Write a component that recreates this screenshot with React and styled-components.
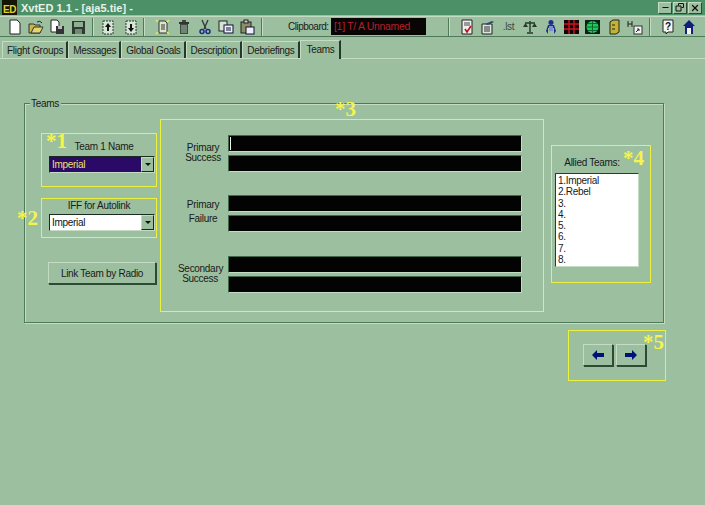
import React from "react";
import styled, { createGlobalStyle } from "styled-components";
import { Minus, X } from "lucide-react";

const face = "#9cbf9f";
const hi = "#c4dcc4";
const lo = "#4f7a5a";
const yellow = "#ecf23c";

const Global = createGlobalStyle`
  html, body { margin: 0; padding: 0; background: ${face}; }
  body { font-family: "Liberation Sans", Arial, sans-serif; font-size: 10px; letter-spacing: -0.3px; color: #1a1a1a; }
`;

const Window = styled.div`
  width: 705px;
  height: 505px;
  overflow: hidden;
  background: ${face};
`;

const TitleBar = styled.div`
  height: 15px;
  background: #4c9068;
  display: flex;
  align-items: center;
  padding: 0 3px 0 2px;
  color: #e8f2e8;
  font-weight: bold;
  font-size: 11px;
  letter-spacing: 0;
`;

const AppIcon = styled.div`
  width: 15px;
  height: 15px;
  background: #151505;
  color: #e0d030;
  font-size: 10px;
  font-weight: bold;
  letter-spacing: -0.5px;
  line-height: 19px;
  text-align: center;
  margin-right: 4px;
  overflow: hidden;
`;

const TitleText = styled.div`
  flex: 1;
`;

const WinButton = styled.div`
  width: 14px;
  height: 12px;
  margin-left: 1px;
  background: ${face};
  border: 1px solid;
  border-color: ${hi} #2c4a34 #2c4a34 ${hi};
  box-sizing: border-box;
  display: flex;
  align-items: center;
  justify-content: center;
  color: #111;
`;

const Toolbar = styled.div`
  height: 21px;
  display: flex;
  align-items: center;
  padding-left: 4px;
  border-top: 1px solid ${hi};
  border-bottom: 1px solid ${lo};
  box-sizing: border-box;
  margin-top: 1px;
`;

const Tool = styled.div`
  width: ${(p) => p.$w || 21}px;
  height: 18px;
  display: flex;
  align-items: center;
  justify-content: center;
  flex: none;
`;

const Sep = styled.div`
  width: 2px;
  height: 18px;
  margin: 0 ${(p) => p.$r ?? 3}px 0 ${(p) => p.$l ?? 4}px;
  border-left: 1px solid ${lo};
  border-right: 1px solid ${hi};
  box-sizing: border-box;
  flex: none;
`;

const ClipLabel = styled.span`
  margin-left: 22px;
  width: 43px;
  font-size: 10px;
  letter-spacing: -0.5px;
  flex: none;
`;

const ClipValue = styled.div`
  width: 95px;
  height: 17px;
  background: #0a0505;
  color: #b5202c;
  font-size: 10.5px;
  line-height: 17px;
  padding-left: 3px;
  box-sizing: border-box;
  flex: none;
`;

const ListText = styled.span`
  font-size: 10px;
  color: #3c4a40;
`;

const Tabs = styled.div`
  display: flex;
  align-items: flex-end;
  height: 21px;
  padding-left: 2px;
`;

const Tab = styled.div`
  height: ${(p) => (p.$active ? 19 : 17)}px;
  line-height: 17px;
  padding: 0 ${(p) => (p.$active ? 4 : 3)}px 0 ${(p) => (p.$active ? 6 : 4)}px;
  border-top: 1px solid ${hi};
  border-left: 1px solid ${hi};
  border-right: 2px solid #26382c;
  box-sizing: border-box;
  margin-bottom: ${(p) => (p.$active ? -1 : 0)}px;
  background: ${face};
  position: relative;
`;

const TabLine = styled.div`
  height: 1px;
  background: ${hi};
`;

const Page = styled.div`
  padding: 44px 0 0 24px;
`;

const Group = styled.div`
  position: relative;
  width: 640px;
  height: 220px;
  box-sizing: border-box;
  border: 1px solid ${lo};
  box-shadow: 1px 1px 0 ${hi}, inset 1px 1px 0 ${hi};
  display: flex;
  padding: 15px 0 0 16px;
`;

const GroupTitle = styled.span`
  position: absolute;
  top: -6px;
  left: 5px;
  padding: 0 2px 0 1px;
  background: ${face};
`;

const Left = styled.div`
  width: 116px;
  padding-top: 14px;
  flex: none;
`;

const Note = styled.div`
  position: relative;
  box-sizing: border-box;
  border: 1px solid ${yellow};
  width: ${(p) => p.$w}px;
  height: ${(p) => p.$h}px;
`;

const Star = styled.span`
  position: absolute;
  font-family: "Liberation Serif", "Times New Roman", serif;
  font-weight: bold;
  font-size: 21px;
  letter-spacing: 0;
  line-height: 21px;
  color: #f4f44c;
  left: ${(p) => p.$x}px;
  top: ${(p) => p.$y}px;
`;

const NameBox = styled(Note)`
  padding: ${(p) => p.$top}px 0 0 7px;
  margin-bottom: ${(p) => p.$gap}px;
`;

const FieldCaption = styled.div`
  width: 100px;
  text-align: center;
  padding-left: ${(p) => p.$indent || 0}px;
  box-sizing: border-box;
  height: 11px;
  line-height: 11px;
  margin-bottom: ${(p) => p.$gap}px;
`;

const Combo = styled.div`
  width: 106px;
  height: 17px;
  box-sizing: border-box;
  display: flex;
  border: 1px solid #1a2a20;
  border-right-color: ${hi};
  border-bottom-color: ${hi};
  background: ${(p) => (p.$dark ? "#2a0a66" : "#fff")};
  color: ${(p) => (p.$dark ? "#f0e070" : "#111")};
  line-height: 15px;
  padding-left: 2px;
`;

const ComboText = styled.span`
  flex: 1;
`;

const ComboArrow = styled.div`
  width: 13px;
  background: ${face};
  border: 1px solid;
  border-color: ${hi} #1a2a20 #1a2a20 ${hi};
  box-sizing: border-box;
  display: flex;
  align-items: center;
  justify-content: center;
  &::after {
    content: "";
    border: 3px solid transparent;
    border-top-color: #111;
    border-bottom: 0;
  }
`;

const RaisedButton = styled.div`
  box-sizing: border-box;
  background: ${face};
  border: 1px solid;
  border-color: ${hi} #2c4a34 #2c4a34 ${hi};
  box-shadow: 1px 1px 0 #2c4a34;
  display: flex;
  align-items: center;
  justify-content: center;
`;

const RadioButton = styled(RaisedButton)`
  width: 108px;
  height: 22px;
  margin: 24px 0 0 7px;
`;

const Messages = styled(Note)`
  margin: 0 0 0 3px;
  padding-top: 15px;
  flex: none;
`;

const MessageRow = styled.div`
  display: flex;
  height: 37px;
  margin-bottom: ${(p) => p.$gap}px;
`;

const RowLabel = styled.div`
  width: 67px;
  margin-top: ${(p) => p.$top}px;
  line-height: ${(p) => p.$lh}px;
  flex: none;
  padding: 0 ${(p) => p.$pad || 0}px 0 17px;
  box-sizing: border-box;
  text-align: center;
`;

const Fields = styled.div`
  display: flex;
  flex-direction: column;
  gap: 3px;
`;

const Field = styled.div`
  width: 294px;
  height: 17px;
  box-sizing: border-box;
  background: #030303;
  border: 1px solid;
  border-color: #3f6a4a ${hi} ${hi} #3f6a4a;
  position: relative;
`;

const Caret = styled.div`
  position: absolute;
  left: 1px;
  top: 1px;
  width: 1px;
  height: 13px;
  background: #eee;
`;

const Allied = styled(Note)`
  margin: 26px 0 0 7px;
  padding: 11px 0 0 3px;
  flex: none;
`;

const AlliedCaption = styled.div`
  text-align: center;
  height: 11px;
  line-height: 11px;
  width: 74px;
  margin-bottom: 5px;
`;

const ListBox = styled.div`
  width: 84px;
  height: 94px;
  box-sizing: border-box;
  background: #fff;
  border: 1px solid;
  border-color: #2c3a30 ${hi} ${hi} #2c3a30;
  padding: 1px 0 0 2px;
  line-height: 11.3px;
`;

const Nav = styled(Note)`
  margin: 7px 0 0 544px;
  display: flex;
  gap: 3px;
  padding: 13px 0 0 14px;
`;

const NavButton = styled(RaisedButton)`
  width: 30px;
  height: 22px;
`;

const Icon = ({ children }) => (
  <svg width="16" height="16" viewBox="0 0 16 16">
    {children}
  </svg>
);

const Doc = () => (
  <Icon>
    <path d="M3 1h7l3 3v11H3z" fill="#fff" stroke="#222" />
  </Icon>
);
const Folder = () => (
  <Icon>
    <path d="M1 5h5l1 1h5v8H1z" fill="#c9b54a" stroke="#333" />
    <path d="M3 14l3-6h9l-3 6z" fill="#e4d56c" stroke="#333" />
    <path d="M9 3q3-2 5 1" fill="none" stroke="#223" />
  </Icon>
);
const DocDisk = () => (
  <Icon>
    <path d="M2 1h6l2 2v10H2z" fill="#fff" stroke="#222" />
    <rect x="7" y="7" width="8" height="8" fill="#333" />
    <rect x="9" y="7" width="4" height="3" fill="#bbb" />
  </Icon>
);
const Disk = () => (
  <Icon>
    <rect x="2" y="2" width="13" height="13" fill="#2e3a33" />
    <rect x="4" y="3" width="9" height="5" fill="#8fae92" />
    <rect x="5" y="10" width="7" height="5" fill="#6d8a72" />
  </Icon>
);
const ArrowDoc = ({ up }) => (
  <Icon>
    <rect x="3" y="2" width="10" height="13" fill="#d8e6d8" stroke="#333" strokeDasharray="2 1" />
    <path d={up ? "M8 4l3 4H9v4H7V8H5z" : "M8 13l3-4H9V5H7v4H5z"} fill="#111" />
  </Icon>
);
const NewItem = () => (
  <Icon>
    <path d="M4 2h6l2 2v10H4z" fill="#dde6cc" stroke="#333" />
    <path d="M6 6h4M6 8h4M6 10h4" stroke="#333" />
    <path d="M1 1l2 2M14 1l-2 2M1 15l2-2M14 15l-2-2" stroke="#e8ee50" strokeWidth="1.4" />
  </Icon>
);
const Trash = () => (
  <Icon>
    <rect x="3" y="3" width="10" height="2" fill="#333" />
    <rect x="6" y="1" width="4" height="2" fill="#444" />
    <path d="M4 5h8v10H4z" fill="#3c4a40" />
    <path d="M6 6v8M8 6v8M10 6v8" stroke="#a9bbab" />
  </Icon>
);
const Cut = () => (
  <Icon>
    <path d="M5 1l4 9M11 1L7 10" stroke="#333" strokeWidth="1.3" />
    <circle cx="5" cy="12.5" r="2" fill="none" stroke="#1a2a8a" strokeWidth="1.5" />
    <circle cx="11" cy="12.5" r="2" fill="none" stroke="#1a2a8a" strokeWidth="1.5" />
  </Icon>
);
const Copy = () => (
  <Icon>
    <rect x="1" y="2" width="8" height="10" fill="#d5e2d5" stroke="#222" />
    <rect x="6" y="6" width="9" height="8" fill="#eef" stroke="#113" />
    <path d="M8 9h5M8 11h5" stroke="#113" />
  </Icon>
);
const Paste = () => (
  <Icon>
    <rect x="2" y="3" width="10" height="11" fill="#8a8f66" stroke="#222" />
    <rect x="5" y="1" width="4" height="3" fill="#ccc" stroke="#222" />
    <rect x="7" y="8" width="8" height="7" fill="#eef" stroke="#113" />
  </Icon>
);
const Check = () => (
  <Icon>
    <path d="M3 1h10v14H3z" fill="#eee" stroke="#222" />
    <path d="M5 4h6M5 6h6" stroke="#444" />
    <path d="M6 10l2 3 4-6" fill="none" stroke="#b01818" strokeWidth="1.6" />
  </Icon>
);
const Brief = () => (
  <Icon>
    <path d="M2 5h10v10H2z" fill="#dde6dd" stroke="#222" />
    <path d="M4 8h6M4 10h6M4 12h6" stroke="#333" />
    <path d="M5 5l7-3 2 1-6 3z" fill="#33466a" />
  </Icon>
);
const Scale = () => (
  <Icon>
    <path d="M8 2v11M3 4h10M5 14h6" stroke="#263a2e" strokeWidth="1.4" />
    <path d="M1 8h5L3.500 4zM10 8h5l-2.500-4z" fill="#263a2e" />
  </Icon>
);
const Robot = () => (
  <Icon>
    <circle cx="8" cy="3.500" r="2.500" fill="#1c2e90" />
    <path d="M5 6h6l2 6-2 3V9H5v6l-2-3z" fill="#1c2e90" />
    <rect x="6" y="7" width="4" height="5" fill="#7d93c8" />
  </Icon>
);
const Grid = () => (
  <Icon>
    <rect x="0" y="1" width="15" height="14" fill="#120408" />
    <path d="M0 5h15M0 10h15M5 1v14M10 1v14" stroke="#d0141e" strokeWidth="1.4" />
  </Icon>
);
const Globe = () => (
  <Icon>
    <rect x="0" y="1" width="15" height="14" fill="#0c2018" />
    <circle cx="7.500" cy="8" r="6" fill="#22c85a" />
    <path d="M7.500 2v12M1.500 8h12M3 4.500h9M3 11.500h9" stroke="#0a6a30" />
  </Icon>
);
const Cabinet = () => (
  <Icon>
    <path d="M4 3l3-2h6v12l-3 2H4z" fill="#c4b330" stroke="#222" />
    <path d="M6 6h3M6 10h3" stroke="#222" />
  </Icon>
);
const Jump = () => (
  <Icon>
    <path d="M1 2v6M5 2v6M1 5h4" stroke="#222" />
    <rect x="7" y="7" width="8" height="8" fill="#eef3ee" stroke="#333" />
    <path d="M9 13l3-3M10 10h2v2" stroke="#223" fill="none" />
  </Icon>
);
const Help = () => (
  <svg width="16" height="16" viewBox="0 0 16 16">
    <path d="M3 1h10v12H8l-2 2v-2H3z" fill="#f4f7f4" stroke="#222" />
    <text x="8" y="11" textAnchor="middle" fontSize="10" fontWeight="bold" fontFamily="Liberation Sans" fill="#111">?</text>
  </svg>
);
const Home = () => (
  <Icon>
    <path d="M8 1l6 6h-2v8H4V7H2z" fill="#10207c" />
    <rect x="6" y="9" width="4" height="6" fill="#f2f4f2" />
  </Icon>
);

const Restore = () => (
  <svg width="10" height="9" viewBox="0 0 10 9">
    <path d="M3.500 2.500v-2h5v4h-2M1 3h5v5H1z" fill="none" stroke="#111" />
  </svg>
);

const Arrow = ({ right }) => (
  <svg width="14" height="10" viewBox="0 0 14 10">
    <path d={right ? "M1 3h7V0l5 5-5 5V7H1z" : "M13 3H6V0L1 5l5 5V7h7z"} fill="#00107a" />
  </svg>
);

const tabs = ["Flight Groups", "Messages", "Global Goals", "Description", "Debriefings"];

const allied = ["1.Imperial", "2.Rebel", "3.", "4.", "5.", "6.", "7.", "8."];

const rows = [
  { label: ["Primary", "Success"], top: 8, lh: 10, gap: 23, caret: true },
  { label: ["Primary", "Failure"], top: 3, lh: 14, gap: 24 },
  { label: ["Secondary", "Success"], top: 8, lh: 10, gap: 0, pad: 6 },
];

export default function App() {
  return (
    <Window>
      <Global />
      <TitleBar>
        <AppIcon>ED</AppIcon>
        <TitleText>XvtED 1.1 - [aja5.tie] -</TitleText>
        <WinButton><Minus size={9} strokeWidth={3} /></WinButton>
        <WinButton><Restore /></WinButton>
        <WinButton><X size={10} strokeWidth={3} /></WinButton>
      </TitleBar>
      <Toolbar>
        <Tool><Doc /></Tool>
        <Tool><Folder /></Tool>
        <Tool><DocDisk /></Tool>
        <Tool><Disk /></Tool>
        <Sep />
        <Tool><ArrowDoc up /></Tool>
        <Tool $w={25}><ArrowDoc /></Tool>
        <Sep $l={0} $r={7} />
        <Tool><NewItem /></Tool>
        <Tool><Trash /></Tool>
        <Tool><Cut /></Tool>
        <Tool><Copy /></Tool>
        <Tool><Paste /></Tool>
        <Sep />
        <ClipLabel>Clipboard:</ClipLabel>
        <ClipValue>[1] T/ A Unnamed</ClipValue>
        <Sep $l={22} $r={6} />
        <Tool><Check /></Tool>
        <Tool><Brief /></Tool>
        <Tool><ListText>.lst</ListText></Tool>
        <Tool><Scale /></Tool>
        <Tool><Robot /></Tool>
        <Tool><Grid /></Tool>
        <Tool><Globe /></Tool>
        <Tool><Cabinet /></Tool>
        <Tool><Jump /></Tool>
        <Sep $l={4} $r={6} />
        <Tool><Help /></Tool>
        <Tool><Home /></Tool>
      </Toolbar>
      <Tabs>
        {tabs.map((name) => (
          <Tab key={name}>{name}</Tab>
        ))}
        <Tab $active>Teams</Tab>
      </Tabs>
      <TabLine />
      <Page>
        <Group>
          <GroupTitle>Teams</GroupTitle>
          <Left>
            <NameBox $w={116} $h={54} $top={7} $gap={11}>
              <Star $x={4} $y={-3}>*1</Star>
              <FieldCaption $indent={10} $gap={4}>Team 1 Name</FieldCaption>
              <Combo $dark><ComboText>Imperial</ComboText><ComboArrow /></Combo>
            </NameBox>
            <NameBox $w={116} $h={40} $top={1} $gap={24}>
              <Star $x={-25} $y={9}>*2</Star>
              <FieldCaption $gap={3}>IFF for Autolink</FieldCaption>
              <Combo><ComboText>Imperial</ComboText><ComboArrow /></Combo>
            </NameBox>
            <RadioButton>Link Team by Radio</RadioButton>
          </Left>
          <Messages $w={384} $h={193}>
            <Star $x={174} $y={-21}>*3</Star>
            {rows.map((r) => (
              <MessageRow key={r.label[0] + r.top} $gap={r.gap}>
                <RowLabel $top={r.top} $lh={r.lh} $pad={r.pad}>
                  {r.label[0]}<br />{r.label[1]}
                </RowLabel>
                <Fields>
                  <Field>{r.caret && <Caret />}</Field>
                  <Field />
                </Fields>
              </MessageRow>
            ))}
          </Messages>
          <Allied $w={100} $h={138}>
            <Star $x={71} $y={2}>*4</Star>
            <AlliedCaption>Allied Teams:</AlliedCaption>
            <ListBox>
              {allied.map((t) => <div key={t}>{t}</div>)}
            </ListBox>
          </Allied>
        </Group>
        <Nav $w={98} $h={51}>
          <Star $x={74} $y={1}>*5</Star>
          <NavButton><Arrow /></NavButton>
          <NavButton><Arrow right /></NavButton>
        </Nav>
      </Page>
    </Window>
  );
}
